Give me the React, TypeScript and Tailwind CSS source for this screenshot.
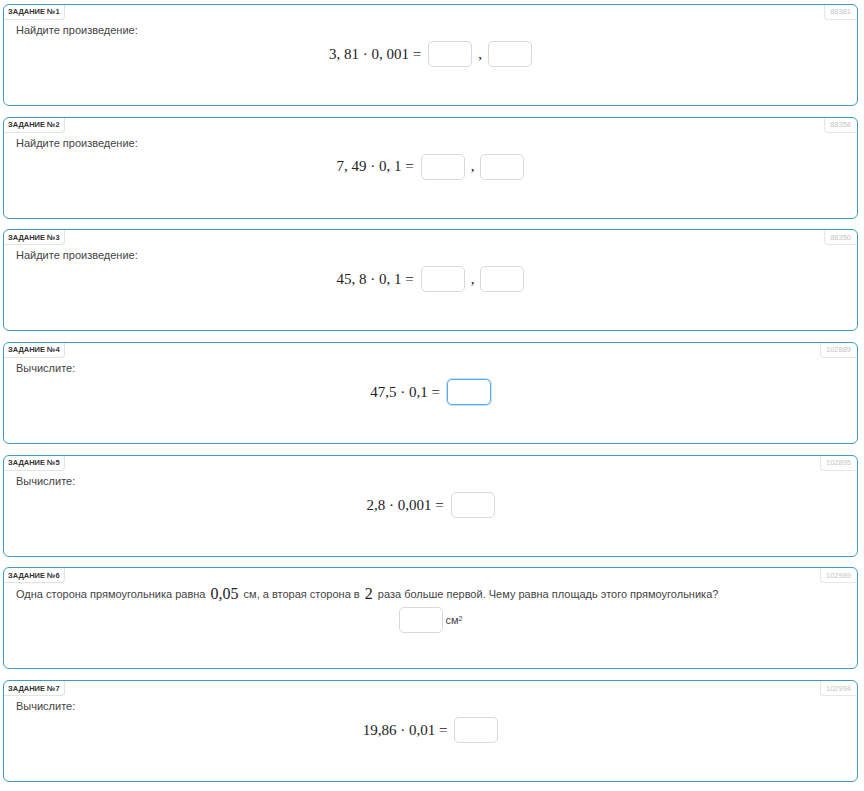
import React from 'react';

const mathFont = { fontFamily: '"Liberation Serif", "DejaVu Serif", serif' };

function Box({ focused = false }: { focused?: boolean }) {
  return (
    <span
      className={
        focused
          ? 'inline-block w-[44px] h-[26px] rounded-[5px] border border-[#5fa8e8] shadow-[0_0_0_1px_rgba(95,168,232,0.35)] bg-white'
          : 'inline-block w-[44px] h-[26px] rounded-[5px] border border-[#d9d9d9] bg-white'
      }
    />
  );
}

type Task = {
  n: number;
  id: string;
  prompt: string;
  expr?: string;
  split?: boolean;
  focused?: boolean;
};

const tasks: Task[] = [
  { n: 1, id: '88381', prompt: 'Найдите произведение:', expr: '3, 81 · 0, 001 =', split: true },
  { n: 2, id: '88358', prompt: 'Найдите произведение:', expr: '7, 49 · 0, 1 =', split: true },
  { n: 3, id: '88350', prompt: 'Найдите произведение:', expr: '45, 8 · 0, 1 =', split: true },
  { n: 4, id: '102889', prompt: 'Вычислите:', expr: '47,5 · 0,1 =', focused: true },
  { n: 5, id: '102895', prompt: 'Вычислите:', expr: '2,8 · 0,001 =' },
  { n: 6, id: '102989', prompt: '' },
  { n: 7, id: '102994', prompt: 'Вычислите:', expr: '19,86 · 0,01 =' },
];

function Card({ t }: { t: Task }) {
  return (
    <div className="relative h-[102px] rounded-[6px] border border-[#3b9cc6] bg-white">
      <div className="absolute left-0 top-0 h-[15px] px-[4px] flex items-center rounded-br-[4px] border-r border-b border-[#e3e3e3] text-[7.5px] font-bold text-[#333]">
        ЗАДАНИЕ №{t.n}
      </div>
      <div className="absolute right-[1px] top-0 h-[15px] px-[5px] flex items-center rounded-bl-[4px] border-l border-b border-[#e6e6e6] text-[7.5px] text-[#c4c4c4]">
        {t.id}
      </div>
      {t.n === 6 ? (
        <div className="pt-[19px] px-[12px] text-[11px] text-[#444]">
          <div className="flex items-center h-[14px] whitespace-nowrap">
            Одна сторона прямоугольника равна&nbsp;
            <span style={mathFont} className="text-[16px] text-[#222] mx-[2px]">0,05</span>
            &nbsp;см, а вторая сторона в&nbsp;
            <span style={mathFont} className="text-[16px] text-[#222] mx-[2px]">2</span>
            &nbsp;раза больше первой. Чему равна площадь этого прямоугольника?
          </div>
          <div className="flex justify-center items-center mt-[6px]">
            <Box />
            <span className="ml-[3px] text-[11px] text-[#444]">
              см<sup className="text-[7px]">2</sup>
            </span>
          </div>
        </div>
      ) : (
        <div className="pt-[18px] px-[12px]">
          <div className="text-[11px] text-[#444] h-[14px] leading-[14px]">{t.prompt}</div>
          <div className="flex justify-center items-center mt-[4px] gap-[6px]">
            <span style={mathFont} className="text-[15px] text-[#222] whitespace-pre mr-[1px]">
              {t.expr}
            </span>
            <Box focused={t.focused} />
            {t.split && (
              <>
                <span style={mathFont} className="text-[15px] text-[#222]">,</span>
                <Box />
              </>
            )}
          </div>
        </div>
      )}
    </div>
  );
}

export default function App() {
  return (
    <div
      className="w-[864px] min-h-[791px] bg-white pl-[3px] pr-[6px] pt-[4px] flex flex-col gap-[10.7px]"
      style={{ fontFamily: '"Liberation Sans", Arial, sans-serif' }}
    >
      {tasks.map((t) => (
        <Card key={t.n} t={t} />
      ))}
    </div>
  );
}
